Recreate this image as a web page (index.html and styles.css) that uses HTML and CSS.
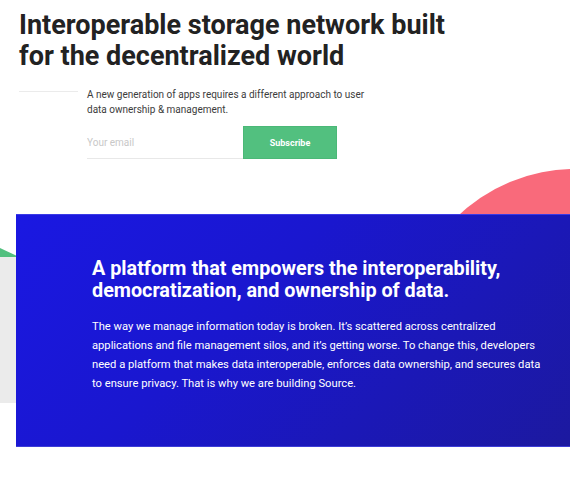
FILE: index.html
```html
<!DOCTYPE html>
<html>
<head>
<meta charset="utf-8">
<link rel="stylesheet" href="styles.css">
</head>
<body>
<header class="hero">
  <h1 class="hero-title">Interoperable storage network built<br>for the decentralized world</h1>
  <div class="intro">
    <span class="rule"></span>
    <div class="intro-body">
      <p class="lead">A new generation of apps requires a different approach to user<br>data ownership &amp; management.</p>
      <form class="signup">
        <input class="email" type="text" placeholder="Your email">
        <button class="subscribe" type="button">Subscribe</button>
      </form>
    </div>
  </div>
</header>
<section class="mission">
  <div class="deco-clip">
    <div class="deco-pink"></div>
    <div class="deco-green"></div>
    <div class="deco-grey"></div>
  </div>
  <div class="panel">
    <h2 class="panel-title">A platform that empowers the interoperability,<br>democratization, and ownership of data.</h2>
    <p class="panel-text">The way we manage information today is broken. It’s scattered across centralized applications and file management silos, and it’s getting worse. To change this, developers need a platform that makes data interoperable, enforces data ownership, and secures data to ensure privacy. That is why we are building Source.</p>
  </div>
</section>
</body>
</html>
```
FILE: styles.css
```css
* { box-sizing: border-box; }
html, body { margin: 0; padding: 0; background: #fff; overflow: hidden; }
body { font-family: Roboto, "Liberation Sans", sans-serif; width: 570px; height: 500px; position: relative; }

.hero { padding: 10px 0 0 19px; }
.hero-title {
  margin: 0;
  font-size: 27px;
  line-height: 31px;
  font-weight: 700;
  color: #222;
}
.intro { display: flex; margin-top: 15px; }
.rule { display: block; width: 59px; height: 1px; background: #ebebeb; margin-top: 4px; margin-right: 9px; flex: none; }
.intro-body { display: flex; flex-direction: column; }
.lead {
  margin: 0;
  font-size: 10px;
  line-height: 15px;
  color: #3c3c3c;
}
.signup { display: flex; margin-top: 9px; }
.email {
  width: 156px; height: 33px;
  border: 0; border-bottom: 1px solid #e8e8e8;
  font-family: inherit; font-size: 10px; color: #333;
  padding: 0; outline: none; background: transparent;
}
.email::placeholder { color: #c8c8c8; }
.subscribe {
  width: 94px; height: 33px;
  border: 1px solid #4bb877; background: #52c07f;
  color: #fff; font-family: inherit; font-weight: 700; font-size: 9px;
  padding: 0;
}

.mission { position: relative; margin-top: 55px; height: 233px; }
.deco-clip {
  position: absolute; left: 0; right: 0; top: -60px; bottom: 0;
  overflow: hidden;
}
.deco-pink {
  position: absolute; left: 405px; top: 15px;
  width: 340px; height: 340px; border-radius: 50%;
  background: #f96a7b;
}
.deco-green {
  position: absolute; left: 0; top: 94px;
  width: 16px; height: 10px;
  background: #52c07f;
  clip-path: polygon(0 0, 100% 75%, 100% 100%, 0 100%);
}
.deco-grey {
  position: absolute; left: 0; top: 103px;
  width: 16px; height: 146px;
  background: #ebebeb;
}
.panel {
  position: relative;
  margin-left: 16px; height: 233px;
  background: linear-gradient(135deg, #1a18e2 0%, #1a17cf 40%, #1c199f 100%);
  border-top: 1px solid #3a3ae6;
  border-bottom: 1px solid #3d3dd6;
  padding: 43px 20px 0 76px;
  color: #fff;
}
.panel-title {
  margin: 0;
  font-size: 19.8px;
  line-height: 22px;
  font-weight: 700;
}
.panel-text {
  margin: 15px 0 0;
  font-size: 11.2px;
  line-height: 19px;
  max-width: 456px;
}
```
